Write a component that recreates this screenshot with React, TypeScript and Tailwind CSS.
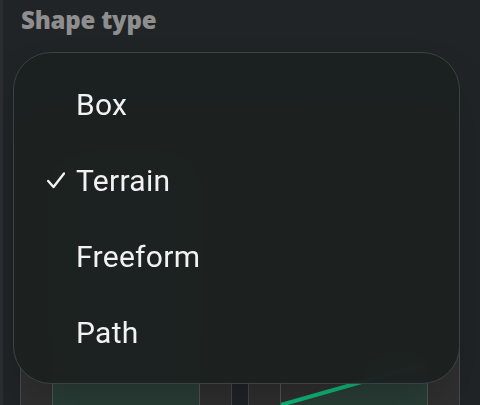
const options = ['Box', 'Terrain', 'Freeform', 'Path']

function PreviewCard({ children }: { children: React.ReactNode }) {
  return (
    <div className="w-[212px] h-[380px] shrink-0 border border-[#4a4a4a] bg-[#303030] p-[31px]">
      {children}
    </div>
  )
}

export default function App() {
  const selected = 'Terrain'

  return (
    <div className="relative w-[480px] h-[405px] overflow-hidden bg-[#212427] border-l-[3px] border-[#2a2d30]">
      {/* Section header */}
      <h2
        className="pl-[18px] pt-[8px] text-[24px] leading-[24px] font-extrabold tracking-[-0.2px] text-[#8e8e8e]"
        style={{ fontFamily: '"Open Sans", sans-serif' }}
      >
        Shape type
      </h2>

      {/* Shape previews behind the menu */}
      <div className="mt-[88px] flex gap-[16px] pl-[17px]">
        <PreviewCard>
          <div className="h-full w-full border border-[#555] bg-[#2a3f37]" />
        </PreviewCard>
        <PreviewCard>
          <div className="h-full w-full border border-[#555] bg-[#303030]">
            <svg viewBox="0 0 146 314" preserveAspectRatio="none" className="block h-full w-full">
              <polygon points="0,252 146,210.5 146,314 0,314" fill="#2a3f37" />
              <line x1="-4" y1="253" x2="146" y2="210.5" stroke="#10b97c" strokeWidth="4" />
            </svg>
          </div>
        </PreviewCard>
      </div>

      {/* Dropdown menu */}
      <div
        className="absolute left-[10px] top-[52px] w-[447px] rounded-[38px] border border-[#37443f] bg-[#1b2120]/95 py-[13px] shadow-2xl backdrop-blur-xl"
        style={{ fontFamily: 'Roboto, sans-serif' }}
      >
        {options.map(option => (
          <div key={option} className="flex h-[76px] items-center pl-[33px] text-[30px] tracking-[0.3px] text-[#f2f2f2]">
            <span className="flex w-[29px] shrink-0 items-center">
              {option === selected && (
                <svg width="18" height="17" viewBox="0 0 18 17" fill="none">
                  <polyline
                    points="1.2,9 6.5,15 17,1.5"
                    stroke="#f2f2f2"
                    strokeWidth="2.4"
                    strokeLinecap="round"
                    strokeLinejoin="round"
                  />
                </svg>
              )}
            </span>
            {option}
          </div>
        ))}
      </div>
    </div>
  )
}
